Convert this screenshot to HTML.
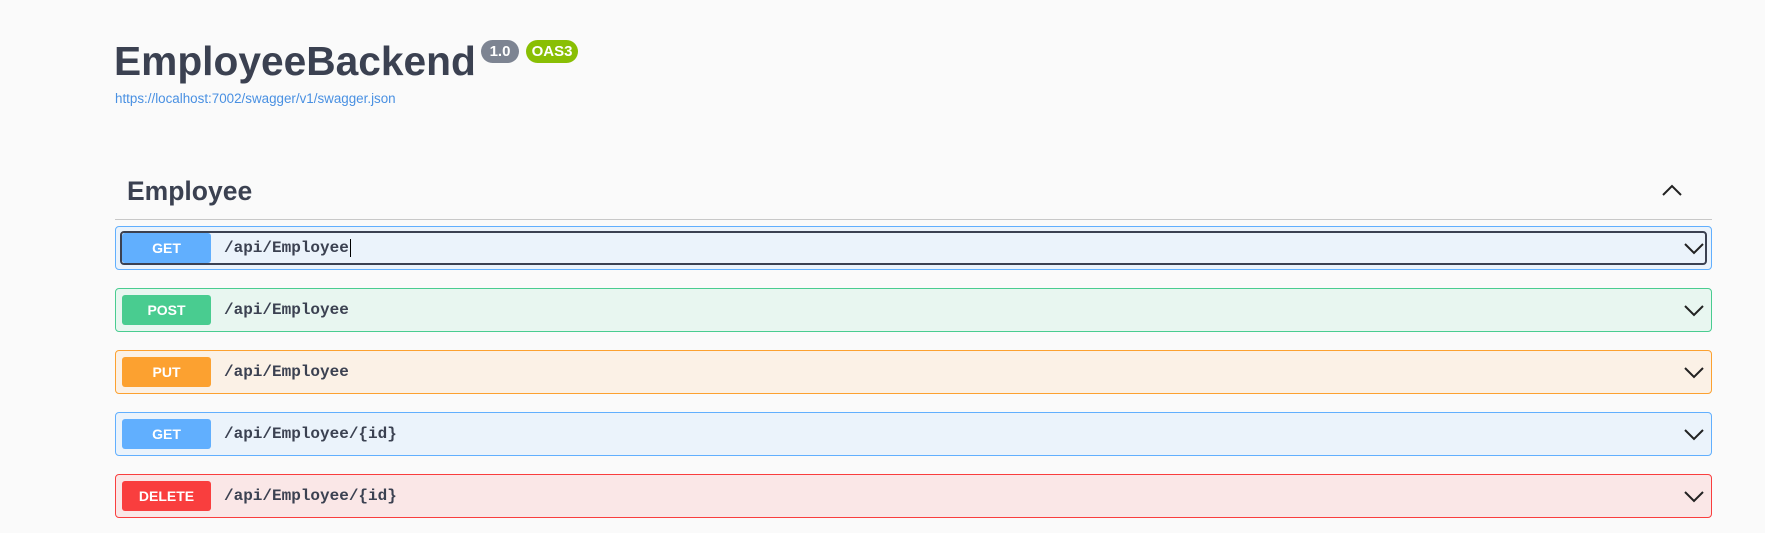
<!DOCTYPE html>
<html><head><style>
body{margin:0;background:#fafafa;font-family:"Liberation Sans",Arial,sans-serif;width:1765px;height:533px;overflow:hidden;position:relative}
.t{position:absolute;left:114px;top:38px;font-size:40.7px;font-weight:bold;color:#3b4151}
.b{position:absolute;top:40px;height:23px;border-radius:12px;color:#fff;font-weight:bold;font-size:15px;line-height:23px;text-align:center}
.u{position:absolute;left:115px;top:91px;font-size:13.4px;color:#4990e2}
.h{position:absolute;left:127px;top:176px;font-size:26.5px;font-weight:bold;color:#3b4151}
.line{position:absolute;left:115px;width:1597px;top:219px;height:1px;background:#c8c8c8}
.op{position:absolute;left:115px;width:1595px;height:42px;border:1px solid;border-radius:4px}
.m{position:absolute;left:6px;top:6px;width:89px;height:30px;border-radius:3px;color:#fff;font-weight:bold;font-size:14px;line-height:30px;text-align:center}
.p{position:absolute;left:108px;top:0;line-height:42px;font-family:"Liberation Mono",monospace;font-weight:bold;font-size:16px;color:#3b4151}
.c{position:absolute;right:6px;top:13px}
</style></head><body>
<div class="t">EmployeeBackend</div>
<div class="b" style="left:481px;width:38px;background:#7d8492">1.0</div>
<div class="b" style="left:526px;width:52px;background:#89bf04">OAS3</div>
<div class="u">https://localhost:7002/swagger/v1/swagger.json</div>
<div class="h">Employee</div>
<svg style="position:absolute;left:1660px;top:182px" width="24" height="16"><path d="M3 13L12 4L21 13" fill="none" stroke="#222" stroke-width="2"/></svg>
<div class="line"></div>

<div class="op" style="top:226px;border-color:#61affe;background:#ebf3fb">
<div style="position:absolute;left:4px;top:4px;right:4px;bottom:4px;border:2px solid #3b4151;border-radius:4px"></div>
<div class="m" style="background:#61affe">GET</div><div class="p">/api/Employee<span style="border-left:1px solid #000;margin-left:1px"></span></div>
<svg class="c" width="22" height="16"><path d="M2 4L11 13L20 4" fill="none" stroke="#222" stroke-width="2"/></svg></div>

<div class="op" style="top:288px;border-color:#49cc90;background:#e8f6f0">
<div class="m" style="background:#49cc90">POST</div><div class="p">/api/Employee</div>
<svg class="c" width="22" height="16"><path d="M2 4L11 13L20 4" fill="none" stroke="#222" stroke-width="2"/></svg></div>

<div class="op" style="top:350px;border-color:#fca130;background:#fbf1e6">
<div class="m" style="background:#fca130">PUT</div><div class="p">/api/Employee</div>
<svg class="c" width="22" height="16"><path d="M2 4L11 13L20 4" fill="none" stroke="#222" stroke-width="2"/></svg></div>

<div class="op" style="top:412px;border-color:#61affe;background:#ebf3fb">
<div class="m" style="background:#61affe">GET</div><div class="p">/api/Employee/{id}</div>
<svg class="c" width="22" height="16"><path d="M2 4L11 13L20 4" fill="none" stroke="#222" stroke-width="2"/></svg></div>

<div class="op" style="top:474px;border-color:#f93e3e;background:#fae7e7">
<div class="m" style="background:#f93e3e">DELETE</div><div class="p">/api/Employee/{id}</div>
<svg class="c" width="22" height="16"><path d="M2 4L11 13L20 4" fill="none" stroke="#222" stroke-width="2"/></svg></div>
</body></html>
